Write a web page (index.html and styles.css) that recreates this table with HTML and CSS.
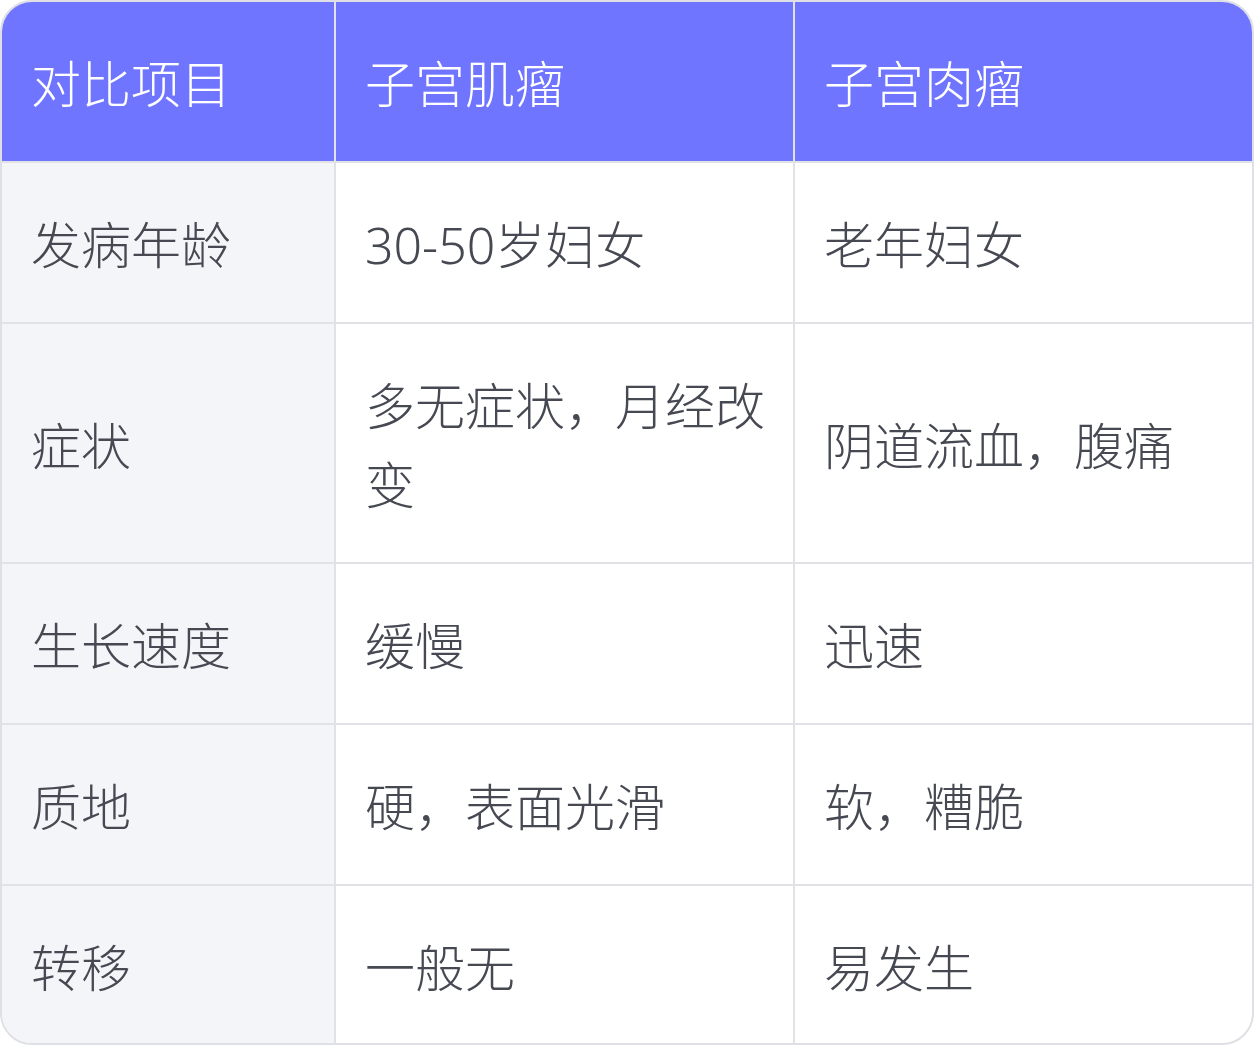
FILE: index.html
```html
<!DOCTYPE html>
<html lang="zh">
<head>
<meta charset="utf-8">
<link rel="stylesheet" href="styles.css">
</head>
<body>
<div class="wrap">
<table class="cmp">
<colgroup><col class="c1"><col class="c2"><col class="c3"></colgroup>
<thead>
<tr><th>对比项目</th><th>子宫肌瘤</th><th>子宫肉瘤</th></tr>
</thead>
<tbody>
<tr><td>发病年龄</td><td>30-50岁妇女</td><td>老年妇女</td></tr>
<tr><td>症状</td><td>多无症状，月经改变</td><td>阴道流血，腹痛</td></tr>
<tr><td>生长速度</td><td>缓慢</td><td>迅速</td></tr>
<tr><td>质地</td><td>硬，表面光滑</td><td>软，糟脆</td></tr>
<tr><td>转移</td><td>一般无</td><td>易发生</td></tr>
</tbody>
</table>
</div>
</body>
</html>
```
FILE: styles.css
```css
html, body { margin: 0; padding: 0; background: #ffffff; }
.wrap {
  width: 1254px;
  height: 1045px;
  box-sizing: border-box;
  border: 2px solid #dfe0e5;
  border-radius: 32px;
  overflow: hidden;
  background: #ffffff;
}
.cmp {
  width: 100%;
  border-collapse: collapse;
  border-style: hidden;
  table-layout: fixed;
  font-family: "Noto Sans", "Noto Sans CJK SC", sans-serif;
  font-weight: 300;
  font-size: 50px;
  line-height: 79px;
  color: #464852;
}
.c1 { width: 333px; }
.c2 { width: 459px; }
.c3 { width: 458px; }
.cmp th, .cmp td {
  border: 2px solid #e1e2e6;
  padding: 43px 16px 37px 29px;
  text-align: left;
  vertical-align: middle;
}
.cmp th {
  background: #6f75ff;
  color: #ffffff;
  font-weight: 300;
  border-color: #e1e2e6;
}
.cmp td:first-child { background: #f4f5f9; }
```
